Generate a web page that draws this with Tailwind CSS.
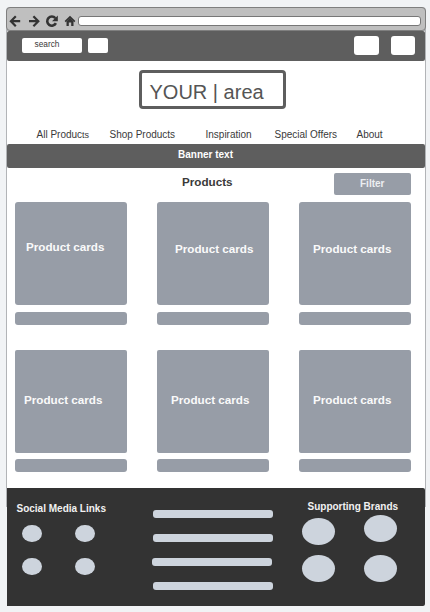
<!DOCTYPE html>
<html lang="en">
<head>
<meta charset="utf-8">
<title>Shop wireframe</title>
<script src="https://cdn.jsdelivr.net/npm/@tailwindcss/browser@4"></script>
</head>
<body class="h-[612px] w-[430px] overflow-hidden bg-[#f1f3f5] pl-[6px] pt-[7px] font-['Liberation_Sans',Arial,sans-serif] text-[10px] leading-[12px] whitespace-nowrap text-[#3a3a3a]">
<div class="flex h-[599px] w-[420px] flex-col rounded-t-[4px] bg-[linear-gradient(#b2b4b7_500px,#f1f3f5_500px)]">
  <!-- Browser toolbar -->
  <div class="flex h-[24px] shrink-0 rounded-[4px] border border-[#7f7f7f] bg-[#bfbfbf]">
    <svg class="h-[22px] w-[71px] shrink-0" viewBox="7 8 71 22" fill="none" stroke="#333" stroke-width="2.200">
      <path d="M20.200 21.200H11.500M15.800 16.200L10.900 21.200L15.800 26.200"/>
      <path d="M29 21.200H37.700M33.400 16.200L38.300 21.200L33.400 26.200"/>
      <path d="M55.300 18.100A4.600 4.600 0 1 0 55.900 23.200" stroke-width="2.600"/>
      <path d="M57.800 15.400V21.200H52Z" fill="#333" stroke="none"/>
      <path d="M65.200 21.700L70 17L74.800 21.700" stroke-width="1.700"/>
      <path d="M66.500 21.500L70 17.800L73.500 21.500V26H71.200V22.500H68.800V26H66.500Z" fill="#333" stroke="none"/>
    </svg>
    <div class="mt-[8px] h-[10px] w-[343px] rounded-[3px] border border-[#777] bg-white"></div>
  </div>
  <div class="mx-px flex flex-1 flex-col bg-white">
    <!-- Header -->
    <header class="flex h-[30px] shrink-0 items-start rounded-[2px] bg-[#5e5e5e] pl-[15px]">
      <div class="mt-[7px] h-[15px] w-[60px] rounded-[2px] bg-white pl-[12.500px] text-[8.330px] leading-[12px]">search</div>
      <div class="ml-[6px] mt-[7px] h-[15px] w-[20px] rounded-[2px] bg-white"></div>
      <div class="ml-[246px] mt-[5px] h-[19px] w-[25px] rounded-[3px] bg-white"></div>
      <div class="ml-[12px] mt-[5px] h-[19px] w-[24px] rounded-[3px] bg-white"></div>
    </header>
    <div class="ml-[132px] mt-[9px] h-[39px] w-[146.500px] shrink-0 rounded-[4px] border-3 border-[#5e5e5e] pl-[7.500px] pt-[7px] text-[20px] leading-[24px] text-[#555]">YOUR | area</div>
    <nav class="mt-[20px] flex h-[15px] shrink-0 pl-[29.500px]">
      <a class="w-[73px]">All Produc<span class="text-[9px]">ts</span></a><a class="w-[96px]">Shop Products</a><a class="w-[69px]">Inspiration</a><a class="w-[82px]">Special Offers</a><a>About</a>
    </nav>
    <div class="h-[24px] shrink-0 rounded-[2px] bg-[#5e5e5e] pl-[171px] pt-[5px] font-bold text-white">Banner text</div>
    <!-- Products -->
    <div class="flex h-[34px] shrink-0 pl-[175px] font-bold">
      <h1 class="w-[152px] pt-[7px] text-[11.670px] leading-[14px]">Products</h1>
      <div class="mt-[5px] h-[22px] w-[77px] rounded-[2px] bg-[#979da7] pl-[26px] pt-[5px] text-[#eceef1]">Filter</div>
    </div>
    <div class="grid shrink-0 grid-cols-[112px_112px_112px] gap-x-[30px] pl-[8px] text-[11.670px] font-bold leading-[14px] text-[#fafafa]">
      <div class="h-[103px] rounded-[3px] bg-[#979da7] pl-[11px] pt-[38px]">Product cards</div>
      <div class="h-[103px] rounded-[3px] bg-[#979da7] pl-[18px] pt-[40px]">Product cards</div>
      <div class="h-[103px] rounded-[3px] bg-[#979da7] pl-[14px] pt-[40px]">Product cards</div>
      <div class="mt-[7px] h-[13px] rounded-[3px] bg-[#979da7]"></div>
      <div class="mt-[7px] h-[13px] rounded-[3px] bg-[#979da7]"></div>
      <div class="mt-[7px] h-[13px] rounded-[3px] bg-[#979da7]"></div>
    </div>
    <div class="mt-[25px] grid shrink-0 grid-cols-[112px_112px_112px] gap-x-[30px] pl-[8px] text-[11.670px] font-bold leading-[14px] text-[#fafafa]">
      <div class="h-[103px] rounded-[2px] bg-[#979da7] pl-[9px] pt-[43px]">Product cards</div>
      <div class="h-[103px] rounded-[2px] bg-[#979da7] pl-[14px] pt-[43px]">Product cards</div>
      <div class="h-[103px] rounded-[2px] bg-[#979da7] pl-[14px] pt-[43px]">Product cards</div>
      <div class="-ml-[0.500px] mr-[0.500px] mt-[6px] h-[13px] rounded-[3px] bg-[#979da7]"></div>
      <div class="mt-[6px] h-[13px] rounded-[3px] bg-[#979da7]"></div>
      <div class="mt-[6px] h-[13px] rounded-[3px] bg-[#979da7]"></div>
    </div>
    <!-- Footer -->
    <footer class="mt-auto flex h-[118px] shrink-0 rounded-r-[2px] bg-[#333] font-bold text-[#f1f1f1]">
      <section class="w-[145px] pl-[9.500px] pt-[15px]">
        <h2>Social Media Links</h2>
        <div class="ml-[5.500px] mt-[9.500px] grid w-max grid-cols-2 gap-x-[32.500px] gap-y-[15.800px]">
          <i class="h-[17.500px] w-[20px] rounded-[50%] bg-[#cdd4dd]"></i><i class="h-[17.500px] w-[20px] rounded-[50%] bg-[#cdd4dd]"></i>
          <i class="h-[17.500px] w-[20px] rounded-[50%] bg-[#cdd4dd]"></i><i class="h-[17.500px] w-[20px] rounded-[50%] bg-[#cdd4dd]"></i>
        </div>
      </section>
      <section class="flex w-[149.500px] flex-col gap-[16px] pt-[22px]">
        <i class="ml-[0.500px] h-[8px] w-[120.500px] rounded-[3px] bg-[#cdd4dd]"></i>
        <i class="ml-[0.500px] h-[8px] w-[120.500px] rounded-[3px] bg-[#cdd4dd]"></i>
        <i class="h-[8px] w-[120px] rounded-[3px] bg-[#cdd4dd]"></i>
        <i class="ml-[0.500px] h-[8px] w-[120.500px] rounded-[3px] bg-[#cdd4dd]"></i>
      </section>
      <section class="pt-[13px]">
        <h2 class="pl-[6px]">Supporting Brands</h2>
        <div class="mt-[1.500px] flex gap-[28.500px]">
          <div class="flex flex-col gap-[9.500px] pt-[3px]"><i class="h-[27.500px] w-[33.500px] rounded-[50%] bg-[#cdd4dd]"></i><i class="h-[27.500px] w-[33.500px] rounded-[50%] bg-[#cdd4dd]"></i></div>
          <div class="flex flex-col gap-[12.500px]"><i class="h-[27.500px] w-[33.500px] rounded-[50%] bg-[#cdd4dd]"></i><i class="h-[27.500px] w-[33.500px] rounded-[50%] bg-[#cdd4dd]"></i></div>
        </div>
      </section>
    </footer>
  </div>
</div>
</body>
</html>
